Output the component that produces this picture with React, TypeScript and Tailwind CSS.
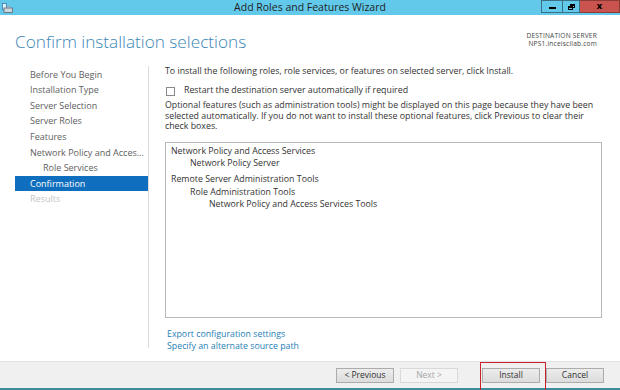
import React from "react";

const sidebar = [
  { label: "Before You Begin", indent: false, state: "normal" },
  { label: "Installation Type", indent: false, state: "normal" },
  { label: "Server Selection", indent: false, state: "normal" },
  { label: "Server Roles", indent: false, state: "normal" },
  { label: "Features", indent: false, state: "normal" },
  { label: "Network Policy and Acces...", indent: false, state: "normal" },
  { label: "Role Services", indent: true, state: "normal" },
  { label: "Confirmation", indent: false, state: "active" },
  { label: "Results", indent: false, state: "disabled" },
];

function Btn({ children, disabled }: { children: React.ReactNode; disabled?: boolean }) {
  return (
    <div
      className={
        "w-[58px] h-[15px] flex items-center justify-center text-[8.5px] border " +
        (disabled
          ? "border-[#d9d9d9] bg-[#f4f4f4] text-[#a6a6a6]"
          : "border-[#acacac] bg-gradient-to-b from-[#ececec] to-[#dcdcdc] text-[#333]")
      }
    >
      {children}
    </div>
  );
}

export default function App() {
  return (
    <div
      className="w-[620px] h-[390px] flex flex-col bg-white overflow-hidden"
      style={{ fontFamily: '"Open Sans", "Noto Sans", sans-serif' }}
    >
      {/* Title bar */}
      <div className="h-[15px] bg-[#62c9ea] flex items-start shrink-0 relative">
        <div className="w-[15px] h-[15px] flex items-center justify-center">
          <svg width="11" height="10" viewBox="0 0 11 10">
            <rect x="0.5" y="0.5" width="4" height="6" fill="#dff3fb" stroke="#3b7fb5" strokeWidth="0.8" />
            <rect x="2" y="5" width="8.5" height="4.5" fill="#cfd6dc" stroke="#5a6670" strokeWidth="0.8" />
            <rect x="5" y="3" width="3" height="2.5" fill="#9aa8b3" />
          </svg>
        </div>
        <div className="flex-1 h-[15px] flex items-center justify-center pl-[64px] text-[10.5px] text-[#1f1f1f]">
          Add Roles and Features Wizard
        </div>
        <div className="flex h-[13px]">
          <div className="w-[21px] h-[13px] border border-[#3a6f86] border-r-0 flex items-end justify-center pb-[3px]">
            <div className="w-[7px] h-[2px] bg-black" />
          </div>
          <div className="w-[18px] h-[13px] border border-[#3a6f86] flex items-center justify-center">
            <div className="relative w-[7px] h-[6px]">
              <div className="absolute right-0 top-0 w-[5px] h-[4px] border border-black border-t-2" />
              <div className="absolute left-0 bottom-0 w-[5px] h-[4px] border border-black border-t-2 bg-[#62c9ea]" />
            </div>
          </div>
          <div className="w-[40px] h-[13px] bg-[#c9534e] border border-l-0 border-[#8e3a35] flex items-center justify-center">
            <span className="text-[9px] font-bold text-black leading-none" style={{ fontFamily: '"DejaVu Sans", sans-serif' }}>
              x
            </span>
          </div>
        </div>
      </div>

      {/* Main */}
      <div className="flex-1 flex flex-col bg-white">
        <div className="flex items-start justify-between pl-[15px] pr-[23px] pt-[16px] h-[51px]">
          <div className="text-[17.2px] font-light text-[#3b87b6] leading-[21px]">
            Confirm installation selections
          </div>
          <div className="text-right text-[6.6px] leading-[8px] text-[#444] pt-[1px] tracking-[0.2px]">
            <div>DESTINATION SERVER</div>
            <div>NPS1.inceiscilab.com</div>
          </div>
        </div>

        <div className="flex flex-1">
          {/* Sidebar */}
          <div className="w-[134px] ml-[15px] border-r border-[#dcdcdc] mb-[13px] pt-[0.5px]">
            {sidebar.map((s) => (
              <div
                key={s.label}
                className={
                  "h-[15.6px] flex items-center text-[9px] whitespace-nowrap " +
                  (s.indent ? "pl-[28px] " : "pl-[15px] ") +
                  (s.state === "active"
                    ? "bg-[#106ebe] text-white"
                    : s.state === "disabled"
                    ? "text-[#c4c4c4]"
                    : "text-[#5e5e5e]")
                }
              >
                {s.label}
              </div>
            ))}
          </div>

          {/* Content */}
          <div className="flex-1 pl-[16px] pr-[18px] flex flex-col text-[8.8px] text-[#333]">
            <div className="h-[12px] flex items-center whitespace-nowrap">
              To install the following roles, role services, or features on selected server, click Install.
            </div>
            <div className="flex items-center h-[12px] mt-[7px]">
              <div className="w-[9px] h-[9px] border border-[#8a8a8a] bg-white ml-[1px] mr-[9px]" />
              <span>Restart the destination server automatically if required</span>
            </div>
            <div className="leading-[10.6px] mt-[3px] whitespace-nowrap">
              <div>Optional features (such as administration tools) might be displayed on this page because they have been</div>
              <div>selected automatically. If you do not want to install these optional features, click Previous to clear their</div>
              <div>check boxes.</div>
            </div>
            <div className="mt-[10px] h-[176px] border border-[#b9b9b9] px-[5px] pt-[2px] leading-[12.5px]">
              <div>Network Policy and Access Services</div>
              <div className="pl-[19px]">Network Policy Server</div>
              <div className="mt-[3.5px]">Remote Server Administration Tools</div>
              <div className="pl-[19px]">Role Administration Tools</div>
              <div className="pl-[38px]">Network Policy and Access Services Tools</div>
            </div>
            <div className="mt-[10px] text-[#1f7fb7] leading-[12px] pl-[2px]">
              <div>Export configuration settings</div>
              <div>Specify an alternate source path</div>
            </div>
          </div>
        </div>
      </div>

      {/* Footer */}
      <div className="h-[27px] shrink-0 bg-[#f0f0f0] border-t border-[#e2e2e2] flex items-center justify-end pr-[16px]">
        <div className="flex items-center gap-[6px]">
          <Btn>&lt; Previous</Btn>
          <Btn disabled>Next &gt;</Btn>
        </div>
        <div className="relative ml-[24px]">
          <Btn>Install</Btn>
          <div className="absolute -left-[2px] -right-[6px] -top-[6px] -bottom-[8px] border-[1.5px] border-[#c8232b]" />
        </div>
        <div className="ml-[6px]">
          <Btn>Cancel</Btn>
        </div>
      </div>
      <div className="h-[2px] shrink-0 bg-[#3f8c9c]" />
    </div>
  );
}
